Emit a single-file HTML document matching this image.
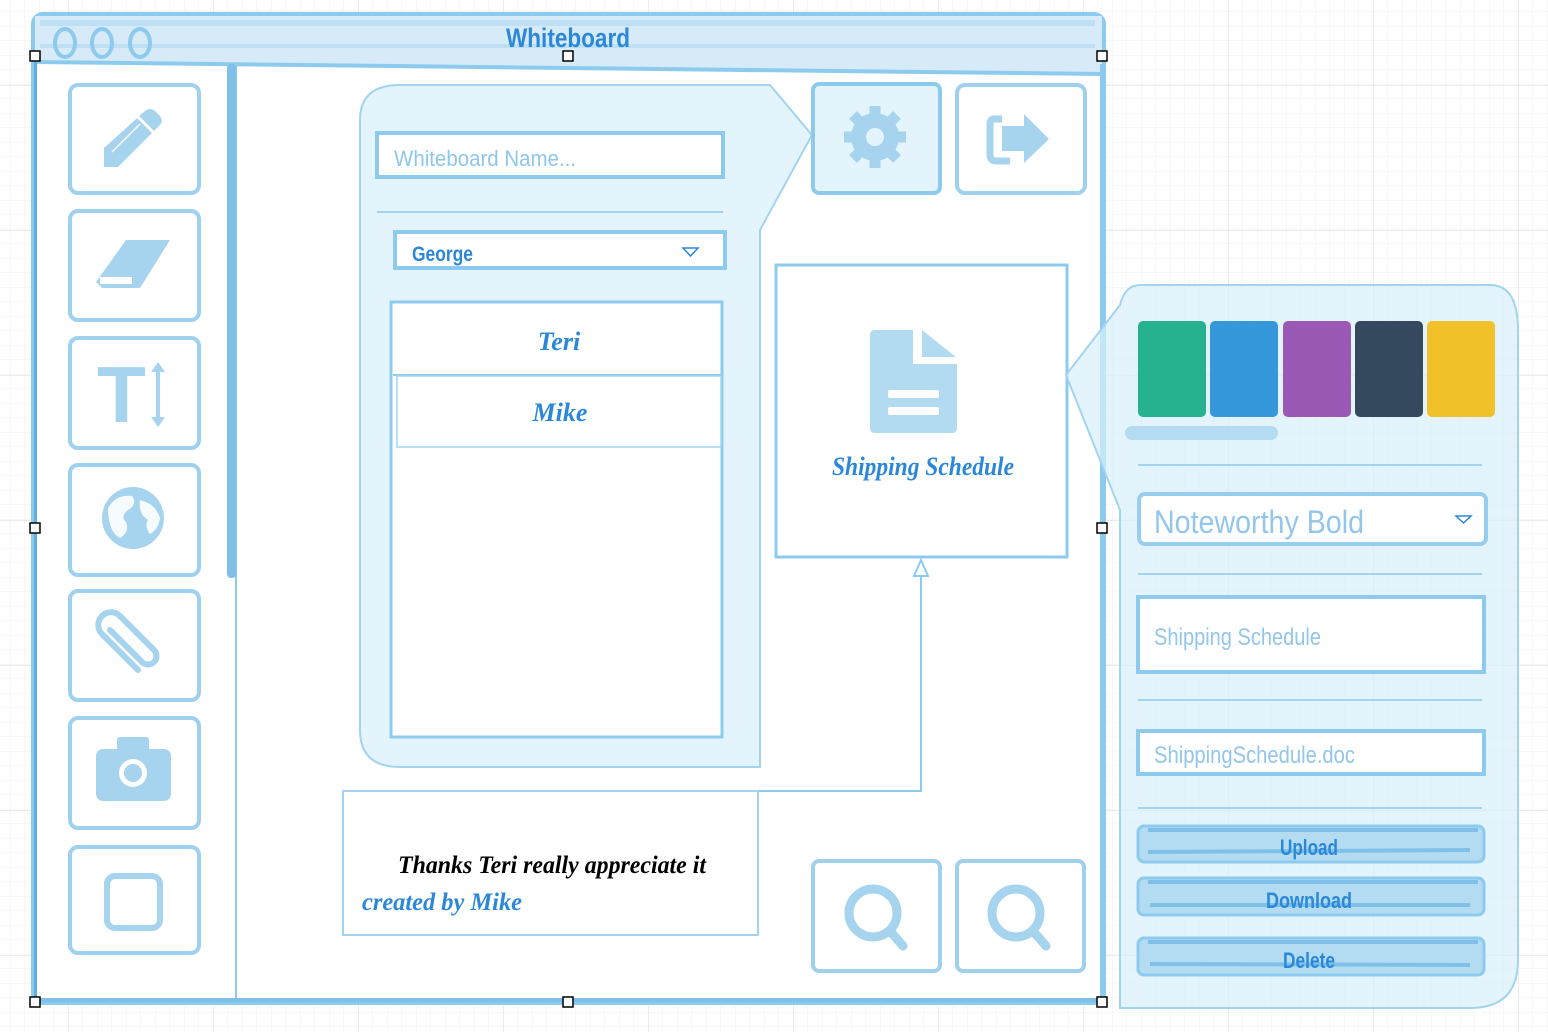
<!DOCTYPE html>
<html><head><meta charset="utf-8"><style>
html,body{margin:0;padding:0;width:1548px;height:1032px;overflow:hidden;background:#fff}
svg{display:block}
text{font-family:"Liberation Sans",sans-serif}
.cur{font-family:"Liberation Serif",serif;font-style:italic;font-weight:bold}
</style></head><body>
<svg width="1548" height="1032" viewBox="0 0 1548 1032" xmlns="http://www.w3.org/2000/svg">
<defs>
<pattern id="minor" width="14.5" height="14.5" patternUnits="userSpaceOnUse" x="10.5" y="12">
<path d="M14.5 0V14.5M0 14.5H14.5" fill="none" stroke="#efefef" stroke-width="1"/></pattern>
<pattern id="major" width="145" height="145" patternUnits="userSpaceOnUse" x="68" y="85">
<path d="M0 0V145M0 0H145" fill="none" stroke="#dadada" stroke-width="1"/></pattern>
</defs>
<rect width="1548" height="1032" fill="url(#minor)"/>
<rect width="1548" height="1032" fill="url(#major)"/>

<!-- window -->
<rect x="33" y="14" width="1071" height="989" rx="10" fill="#fff" stroke="#8ccbee" stroke-width="4"/>
<path d="M35 16 H1102 V74 Q560 68 35 62Z" fill="#d6eaf8"/>
<rect x="40" y="20" width="1055" height="6" fill="#bfe0f4"/>
<rect x="40" y="44" width="1055" height="4" fill="#bfe0f4"/>
<path d="M35 62 Q560 68 1102 74" stroke="#8ccbee" stroke-width="4" fill="none"/>
<ellipse cx="65" cy="43" rx="10" ry="14" fill="none" stroke="#8ccbee" stroke-width="4"/>
<ellipse cx="102" cy="43" rx="10" ry="14" fill="none" stroke="#8ccbee" stroke-width="4"/>
<ellipse cx="140" cy="43" rx="10" ry="14" fill="none" stroke="#8ccbee" stroke-width="4"/>
<text x="568" y="47" text-anchor="middle" font-size="27" font-weight="bold" fill="#2b88d8" textLength="124" lengthAdjust="spacingAndGlyphs">Whiteboard</text>
<rect x="34" y="62" width="3" height="940" fill="#5eaee0"/>
<line x1="236" y1="64" x2="236" y2="1000" stroke="#8ccbee" stroke-width="2"/>
<rect x="227" y="64" width="9" height="514" rx="4" fill="#7fc0e8"/>
<line x1="35" y1="1000" x2="1102" y2="1000" stroke="#7fc0e8" stroke-width="4"/>
<line x1="1102" y1="64" x2="1102" y2="1000" stroke="#8ccbee" stroke-width="4"/>

<!-- sidebar buttons -->
<g fill="#fff" stroke="#9fd0ee" stroke-width="4">
<rect x="70" y="85" width="129" height="108" rx="8"/>
<rect x="70" y="211" width="129" height="109" rx="8"/>
<rect x="70" y="338" width="129" height="110" rx="8"/>
<rect x="70" y="465" width="129" height="110" rx="8"/>
<rect x="70" y="591" width="129" height="109" rx="8"/>
<rect x="70" y="718" width="129" height="110" rx="8"/>
<rect x="70" y="847" width="129" height="106" rx="8"/>
</g>
<g fill="#a6d3ee">
<path d="M104 148 L145 111 Q150 107 155 111 L160 116 Q164 121 159 126 L118 167 L104 167 Z"/>
<line x1="138" y1="117" x2="154" y2="133" stroke="#fff" stroke-width="3"/>
<line x1="112" y1="152" x2="140" y2="124" stroke="#fff" stroke-width="1.5"/>
<path d="M96 282 L126 240 L170 240 L140 288 L102 288 Z"/>
<rect x="100" y="277" width="32" height="7" fill="#fff"/>
<text x="97" y="422" font-family="Liberation Serif,serif" font-size="80" font-weight="bold" fill="#a6d3ee">T</text>
<rect x="156" y="370" width="4" height="50"/><path d="M151 372 L158 362 L165 372Z M151 417 L158 427 L165 417Z"/>
<circle cx="133" cy="518" r="31"/>
<path d="M108 508 q8 -14 24 -12 q6 8 -4 14 q-8 6 -2 12 q4 10 -6 16 q-12 -6 -12 -30Z M140 500 q16 4 20 18 q-2 12 -10 16 q-6 -8 -2 -14 q-10 -6 -8 -20Z" fill="#fff" opacity=".9"/>
<rect x="96" y="749" width="75" height="52" rx="7"/><rect x="117" y="737" width="32" height="16" rx="3"/>
</g>
<path d="M110 630 L142 662 a8 8 0 0 0 12 -12 L120 616 a12 12 0 0 0 -18 18 L138 670" fill="none" stroke="#a6d3ee" stroke-width="6" stroke-linecap="round"/>
<circle cx="133" cy="773" r="14" fill="#fff"/><circle cx="133" cy="773" r="9" fill="#a6d3ee"/>
<rect x="107" y="876" width="53" height="52" rx="8" fill="none" stroke="#a6d3ee" stroke-width="6"/>

<!-- popover -->
<path d="M400 85 H770 L812 135 L760 230 V767 H400 Q360 767 360 730 V120 Q360 85 400 85Z" fill="#e3f4fd" stroke="#a3d4ef" stroke-width="2"/>
<rect x="377" y="133" width="346" height="44" fill="#fff" stroke="#8ccbee" stroke-width="4"/>
<text x="394" y="166" font-size="22" fill="#8ec7eb" textLength="182" lengthAdjust="spacingAndGlyphs">Whiteboard Name...</text>
<line x1="377" y1="212" x2="723" y2="212" stroke="#a3d4ef" stroke-width="2"/>
<rect x="395" y="232" width="330" height="36" fill="#fff" stroke="#8ccbee" stroke-width="4"/>
<text x="412" y="261" font-size="21" font-weight="bold" fill="#2b88d8" textLength="61" lengthAdjust="spacingAndGlyphs">George</text>
<path d="M683 248 H698 L690.5 256Z" fill="none" stroke="#2b88d8" stroke-width="1.5"/>
<rect x="391" y="302" width="331" height="435" fill="#fff" stroke="#8ccbee" stroke-width="3"/>
<line x1="393" y1="375" x2="721" y2="375" stroke="#8ccbee" stroke-width="2"/>
<rect x="397" y="376" width="324" height="71" fill="none" stroke="#a3d4ef" stroke-width="1.5"/>
<text class="cur" x="559" y="350" text-anchor="middle" font-size="26" fill="#2b88d8">Teri</text>
<text class="cur" x="560" y="421" text-anchor="middle" font-size="26" fill="#2b88d8">Mike</text>

<!-- top buttons -->
<rect x="813" y="84" width="127" height="109" rx="6" fill="#e3f4fd" stroke="#8ccbee" stroke-width="4"/>
<rect x="957" y="85" width="128" height="108" rx="8" fill="#fff" stroke="#9fd0ee" stroke-width="4"/>
<g fill="#a6d3ee">
<circle cx="875" cy="137" r="24"/>
<g stroke="#a6d3ee" stroke-width="11">
<line x1="875" y1="106" x2="875" y2="168"/><line x1="844" y1="137" x2="906" y2="137"/>
<line x1="853" y1="115" x2="897" y2="159"/><line x1="897" y1="115" x2="853" y2="159"/></g>
<circle cx="875" cy="137" r="9" fill="#e3f4fd"/>
<path d="M1002 119 H994 Q990 119 990 124 V154 Q990 161 996 161 H1010" fill="none" stroke="#a6d3ee" stroke-width="7"/>
<path d="M1002 126 H1024 V114 L1049 139 L1024 163 V151 H1002Z"/>
</g>

<!-- doc card -->
<rect x="776" y="265" width="291" height="292" fill="#fff" stroke="#8ccbee" stroke-width="3"/>
<path d="M875 330 H913 V364 H957 V428 Q957 433 952 433 H875 Q870 433 870 428 V335 Q870 330 875 330Z M922 330 L956 357 H922Z" fill="#b2dbf1"/>
<rect x="888" y="390" width="51" height="8" rx="2" fill="#fff"/><rect x="888" y="407" width="51" height="8" rx="2" fill="#fff"/>
<text class="cur" x="923" y="475" text-anchor="middle" font-size="26" fill="#2b88d8" textLength="182" lengthAdjust="spacingAndGlyphs">Shipping Schedule</text>
<path d="M921 574 V791 H550" fill="none" stroke="#8ccbee" stroke-width="2"/>
<path d="M914 576 L921 560 L928 576Z" fill="#fff" stroke="#8ccbee" stroke-width="2"/>

<!-- comment -->
<rect x="343" y="791" width="415" height="144" fill="#fff" stroke="#a3d4ef" stroke-width="2"/>
<text class="cur" x="552" y="873" text-anchor="middle" font-size="25" fill="#000" textLength="308" lengthAdjust="spacingAndGlyphs">Thanks Teri really appreciate it</text>
<text class="cur" x="362" y="910" font-size="25" fill="#2b88d8" textLength="160" lengthAdjust="spacingAndGlyphs">created by Mike</text>

<!-- search buttons -->
<rect x="813" y="861" width="127" height="110" rx="6" fill="#fff" stroke="#9fd0ee" stroke-width="4"/>
<rect x="957" y="861" width="127" height="110" rx="6" fill="#fff" stroke="#9fd0ee" stroke-width="4"/>
<g fill="none" stroke="#a6d3ee" stroke-width="9" stroke-linecap="round">
<circle cx="873" cy="913" r="24"/><line x1="890" y1="931" x2="903" y2="946"/>
<circle cx="1016" cy="913" r="24"/><line x1="1033" y1="931" x2="1046" y2="946"/>
</g>

<!-- right panel -->
<path d="M1140 285 H1490 Q1518 285 1518 330 V960 Q1518 1008 1470 1008 H1120 V510 L1066 375 L1120 305 Q1125 285 1140 285Z" fill="#d8effc" fill-opacity=".7" stroke="#a3d4ef" stroke-width="2"/>
<rect x="1138" y="321" width="68" height="96" rx="5" fill="#26b18f"/>
<rect x="1210" y="321" width="68" height="96" rx="5" fill="#3498db"/>
<rect x="1283" y="321" width="68" height="96" rx="5" fill="#9b59b6"/>
<rect x="1355" y="321" width="68" height="96" rx="5" fill="#34495e"/>
<rect x="1427" y="321" width="68" height="96" rx="5" fill="#f0c129"/>
<rect x="1125" y="426" width="153" height="14" rx="7" fill="#b3dcf2"/>
<g stroke="#a3d4ef" stroke-width="2">
<line x1="1138" y1="465" x2="1482" y2="465"/><line x1="1138" y1="574" x2="1482" y2="574"/>
<line x1="1138" y1="700" x2="1482" y2="700"/><line x1="1138" y1="808" x2="1482" y2="808"/></g>
<rect x="1139" y="494" width="347" height="50" rx="6" fill="#fff" stroke="#97cdee" stroke-width="4"/>
<text x="1154" y="533" font-size="32" fill="#93c6eb" textLength="210" lengthAdjust="spacingAndGlyphs">Noteworthy Bold</text>
<path d="M1456 516 H1471 L1463.5 523Z" fill="none" stroke="#2b88d8" stroke-width="1.5"/>
<rect x="1138" y="597" width="346" height="75" fill="#fff" stroke="#8ccbee" stroke-width="4"/>
<text x="1154" y="645" font-size="24" fill="#93c6eb" textLength="167" lengthAdjust="spacingAndGlyphs">Shipping Schedule</text>
<rect x="1138" y="731" width="346" height="43" fill="#fff" stroke="#8ccbee" stroke-width="4"/>
<text x="1154" y="763" font-size="24" fill="#93c6eb" textLength="201" lengthAdjust="spacingAndGlyphs">ShippingSchedule.doc</text>
<g fill="#b3dcf2" stroke="#8ccbee" stroke-width="3">
<rect x="1138" y="826" width="346" height="36" rx="6"/>
<rect x="1138" y="878" width="346" height="37" rx="6"/>
<rect x="1138" y="938" width="346" height="37" rx="6"/></g>
<g stroke="#7fc0e8" stroke-width="4">
<line x1="1148" y1="830" x2="1478" y2="830"/><line x1="1148" y1="852" x2="1470" y2="850"/>
<line x1="1148" y1="882" x2="1478" y2="882"/><line x1="1150" y1="905" x2="1470" y2="905"/>
<line x1="1148" y1="942" x2="1478" y2="942"/><line x1="1150" y1="964" x2="1470" y2="965"/></g>
<g font-size="22" fill="#2b88d8" text-anchor="middle" font-weight="bold">
<text x="1309" y="855" textLength="58" lengthAdjust="spacingAndGlyphs">Upload</text><text x="1309" y="908" textLength="86" lengthAdjust="spacingAndGlyphs">Download</text><text x="1309" y="968" textLength="52" lengthAdjust="spacingAndGlyphs">Delete</text></g>

<!-- handles -->
<g fill="#fff" stroke="#000" stroke-width="1.5">
<rect x="30" y="51" width="10" height="10"/><rect x="563" y="51" width="10" height="10"/><rect x="1097" y="51" width="10" height="10"/>
<rect x="30" y="523" width="10" height="10"/><rect x="1097" y="523" width="10" height="10"/>
<rect x="30" y="997" width="10" height="10"/><rect x="563" y="997" width="10" height="10"/><rect x="1097" y="997" width="10" height="10"/>
</g>
</svg>
</body></html>
